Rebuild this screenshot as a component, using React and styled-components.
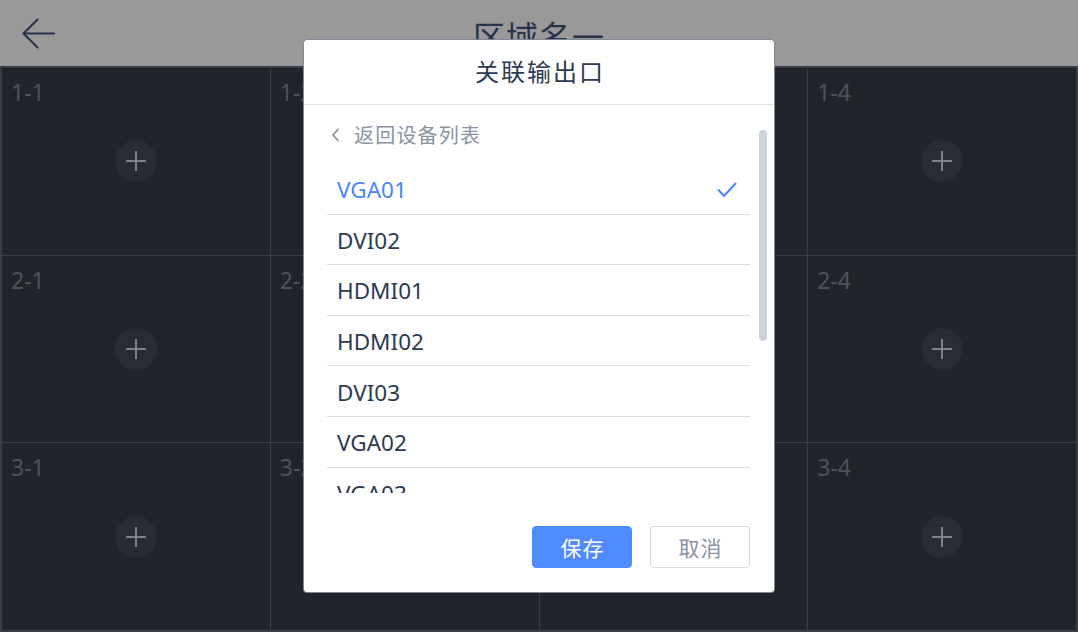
import React from "react";
import styled, { createGlobalStyle } from "styled-components";

const Global = createGlobalStyle`
  html, body { margin: 0; padding: 0; }
  body { font-family: "Noto Sans", "Noto Sans CJK SC", sans-serif; }
  * { box-sizing: border-box; }
`;

const Page = styled.div`
  position: relative;
  width: 1078px;
  height: 632px;
  display: flex;
  flex-direction: column;
  overflow: hidden;
  background: #999999;
`;

const Header = styled.header`
  height: 66px;
  flex: none;
  display: flex;
  align-items: center;
  justify-content: center;
  position: relative;
  background: #999999;
`;

const BackButton = styled.button`
  position: absolute;
  left: 20px;
  top: 17px;
  width: 36px;
  height: 34px;
  padding: 0;
  border: 0;
  background: none;
  display: flex;
  align-items: center;
  justify-content: center;
`;

const Title = styled.h1`
  margin: 0;
  font-family: "Noto Sans CJK SC", sans-serif;
  font-weight: 400;
  font-size: 32px;
  color: #28324a;
  letter-spacing: 1px;
  padding-top: 4px;
`;

const Grid = styled.div`
  flex: 1;
  display: grid;
  grid-template-columns: repeat(4, 1fr);
  grid-template-rows: repeat(3, 1fr);
  gap: 1px;
  background: #3a3d47;
  border: 2px solid #3a3d47;
`;

const Cell = styled.div`
  background: #21242b;
  position: relative;
  display: flex;
  align-items: center;
  justify-content: center;
`;

const CellLabel = styled.span`
  position: absolute;
  left: 9px;
  top: 8px;
  font-size: 23px;
  line-height: 32px;
  color: #4f535a;
`;

const AddButton = styled.div`
  width: 42px;
  height: 42px;
  border-radius: 50%;
  background: #292c33;
  display: flex;
  align-items: center;
  justify-content: center;
`;

const Modal = styled.div`
  position: absolute;
  left: 303px;
  top: 39px;
  width: 472px;
  height: 554px;
  background: #ffffff;
  border: 1px solid #7d8898;
  border-radius: 4px;
  display: flex;
  flex-direction: column;
`;

const ModalTitle = styled.div`
  height: 65px;
  flex: none;
  display: flex;
  align-items: center;
  justify-content: center;
  border-bottom: 1px solid #dde1e8;
  font-family: "Noto Sans CJK SC", sans-serif;
  font-size: 24px;
  color: #2c3a52;
  letter-spacing: 2px;
  padding: 0 0 3px 2px;
`;

const Body = styled.div`
  display: flex;
  padding: 0 7px 0 23px;
  gap: 9px;
`;

const ListArea = styled.div`
  width: 424px;
  display: flex;
  flex-direction: column;
`;

const BackRow = styled.div`
  height: 59px;
  display: flex;
  align-items: center;
  gap: 14px;
  padding-left: 4px;
  font-family: "Noto Sans CJK SC", sans-serif;
  font-size: 20px;
  letter-spacing: 1.2px;
  color: #8b94a4;
`;

const List = styled.ul`
  list-style: none;
  margin: 0;
  padding: 0;
  height: 329px;
  overflow: hidden;
`;

const Item = styled.li`
  height: 50.6px;
  border-bottom: 1px solid #d8dde5;
  display: flex;
  align-items: center;
  justify-content: space-between;
  padding: 2px 13px 0 10px;
  font-size: 22.5px;
  color: ${(p) => (p.$active ? "#4a86f7" : "#2c3a52")};
`;

const Track = styled.div`
  width: 8px;
  margin-top: 25px;
`;

const Thumb = styled.div`
  width: 8px;
  height: 211px;
  border-radius: 4px;
  background: #cdd3dc;
`;

const Footer = styled.div`
  margin-top: auto;
  display: flex;
  justify-content: flex-end;
  gap: 18px;
  padding: 0 24px 24px 0;
`;

const Button = styled.button`
  width: 100px;
  height: 42px;
  border-radius: 4px;
  font-family: "Noto Sans CJK SC", sans-serif;
  font-size: 21px;
  letter-spacing: 1px;
  border: 1px solid ${(p) => (p.$primary ? "#4f8bff" : "#d5dae2")};
  background: ${(p) => (p.$primary ? "#4f8bff" : "#ffffff")};
  color: ${(p) => (p.$primary ? "#ffffff" : "#8a93a3")};
  padding: 0 0 0 1px;
`;

const cells = ["1-1", "1-2", "1-3", "1-4", "2-1", "2-2", "2-3", "2-4", "3-1", "3-2", "3-3", "3-4"];
const outputs = ["VGA01", "DVI02", "HDMI01", "HDMI02", "DVI03", "VGA02", "VGA03", "VGA04"];

export default function App() {
  return (
    <Page>
      <Global />
      <Header>
        <BackButton>
          <svg width="34" height="32" viewBox="0 0 34 32" fill="none" stroke="#28324a" strokeWidth="2" strokeLinecap="round" strokeLinejoin="round">
            <path d="M33 15.5H2.5" />
            <path d="M16.5 1.5L2.5 15.5L16.5 29.5" />
          </svg>
        </BackButton>
        <Title>区域名一</Title>
      </Header>
      <Grid>
        {cells.map((c) => (
          <Cell key={c}>
            <CellLabel>{c}</CellLabel>
            <AddButton>
              <svg width="20" height="20" viewBox="0 0 20 20" stroke="#7e8187" strokeWidth="2">
                <path d="M10 0V20M0 10H20" />
              </svg>
            </AddButton>
          </Cell>
        ))}
      </Grid>
      <Modal>
        <ModalTitle>关联输出口</ModalTitle>
        <Body>
          <ListArea>
            <BackRow>
              <svg width="9" height="14" viewBox="0 0 9 14" fill="none" stroke="#8b94a4" strokeWidth="1.8" strokeLinecap="round" strokeLinejoin="round">
                <path d="M7 1.5L2 7L7 12.5" />
              </svg>
              返回设备列表
            </BackRow>
            <List>
              {outputs.map((o, i) => (
                <Item key={o} $active={i === 0}>
                  {o}
                  {i === 0 && (
                    <svg width="20" height="16" viewBox="0 0 20 16" fill="none" stroke="#4a86f7" strokeWidth="2" strokeLinecap="round" strokeLinejoin="round">
                      <path d="M1.5 8L7 14L18.5 1.5" />
                    </svg>
                  )}
                </Item>
              ))}
            </List>
          </ListArea>
          <Track>
            <Thumb />
          </Track>
        </Body>
        <Footer>
          <Button $primary>保存</Button>
          <Button>取消</Button>
        </Footer>
      </Modal>
    </Page>
  );
}
